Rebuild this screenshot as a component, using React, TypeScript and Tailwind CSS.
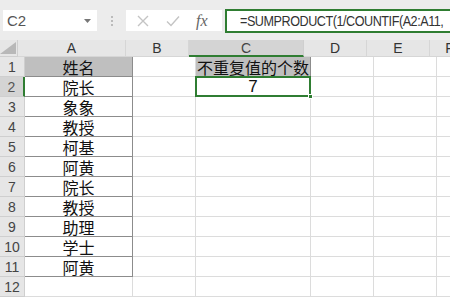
import React from "react";

const cols = [
  { name: "A", w: 108 },
  { name: "B", w: 63 },
  { name: "C", w: 115 },
  { name: "D", w: 63 },
  { name: "E", w: 63 },
  { name: "F", w: 40 },
];

const aVals = ["姓名", "院长", "象象", "教授", "柯基", "阿黄", "院长", "教授", "助理", "学士", "阿黄"];

const cjk = { fontFamily: '"Noto Sans CJK SC", "Noto Sans", sans-serif' };
const lat = { fontFamily: '"Liberation Sans", Arial, sans-serif' };

export default function App() {
  const rows = Array.from({ length: 12 }, (_, i) => i + 1);
  return (
    <div className="w-[450px] h-[300px] overflow-hidden bg-white relative" style={lat}>
      {/* toolbar */}
      <div className="h-[40px] bg-[#ececec] flex items-start pt-[10px] pl-[3px]">
        <div className="w-[94px] h-[21px] bg-white flex items-center justify-between pl-[4px] pr-[6px]">
          <span className="text-[15px] text-[#555] leading-none">C2</span>
          <svg width="7" height="4" viewBox="0 0 7 4"><polygon points="0,0 7,0 3.5,4" fill="#777" /></svg>
        </div>
        <div className="w-[29px] h-[21px] flex flex-col items-center justify-center gap-[2px]">
          <div className="w-[2px] h-[2px] bg-[#bbb]" />
          <div className="w-[2px] h-[2px] bg-[#bbb]" />
          <div className="w-[2px] h-[2px] bg-[#bbb]" />
        </div>
        <div className="w-[96px] h-[21px] bg-white flex items-center">
          <svg width="12" height="12" viewBox="0 0 12 12" className="ml-[11px]">
            <path d="M1 1 L11 11 M11 1 L1 11" stroke="#c4c4c4" strokeWidth="1.4" />
          </svg>
          <svg width="14" height="12" viewBox="0 0 14 12" className="ml-[17px]">
            <path d="M1 6.5 L5 10.5 L13 1.5" stroke="#c4c4c4" strokeWidth="1.4" fill="none" />
          </svg>
          <span className="ml-[16px] text-[16px] italic text-[#666] leading-none" style={{ fontFamily: '"Liberation Serif", serif' }}>fx</span>
        </div>
        <div className="ml-[3px] mt-[-1px] flex-1 h-[24px] border-2 border-r-0 border-[#2f7d32] bg-white flex items-center pl-[13px] overflow-hidden whitespace-nowrap">
          <span className="text-[14px] text-[#333] leading-none tracking-[-0.5px] scale-x-90 origin-left inline-block">=SUMPRODUCT(1/COUNTIF(A2:A11,</span>
        </div>
      </div>
      {/* header row */}
      <div className="flex h-[17px]">
        <div className="w-[25px] bg-[#e6e6e6] border-r border-b border-[#cfcfcf] flex items-end justify-end pr-[1px] pb-[2px]">
          <svg width="16" height="12" viewBox="0 0 16 12"><polygon points="16,0 16,12 0,12" fill="#b8b8b8" /></svg>
        </div>
        {cols.map((c) => (
          <div
            key={c.name}
            style={{ width: c.w }}
            className={
              c.name === "C"
                ? "shrink-0 bg-[#d4d4d4] border-r border-[#cfcfcf] border-b-2 border-b-[#2f7d32] flex items-center justify-center text-[14px] text-[#444] leading-none"
                : "shrink-0 bg-[#e6e6e6] border-r border-b border-[#d6d6d6] flex items-center justify-center text-[14px] text-[#333] leading-none"
            }
          >
            {c.name}
          </div>
        ))}
      </div>
      {rows.map((r) => (
        <div key={r} className="flex h-[20px]">
          <div
            className={
              r === 2
                ? "w-[25px] shrink-0 bg-[#d4d4d4] border-b border-[#cfcfcf] border-r-2 border-r-[#2f7d32] flex items-center justify-center text-[14px] text-[#555] leading-none"
                : "w-[25px] shrink-0 bg-[#e6e6e6] border-r border-b border-[#cfcfcf] flex items-center justify-center text-[14px] text-[#444] leading-none"
            }
          >
            {r}
          </div>
          {cols.map((c) => {
            if (c.name === "A" && r <= 11) {
              return (
                <div
                  key={c.name}
                  style={{ width: c.w, ...cjk }}
                  className={
                    r === 1
                      ? "shrink-0 bg-[#bfbfbf] border-r border-b border-[#8c8c8c] flex items-center justify-center text-[16px] text-[#111] leading-none"
                      : "shrink-0 bg-white border-r border-b border-[#8c8c8c] flex items-center justify-center text-[16px] text-[#111] leading-none"
                  }
                >
                  {aVals[r - 1]}
                </div>
              );
            }
            if (c.name === "C" && r === 1) {
              return (
                <div
                  key={c.name}
                  style={{ width: c.w, ...cjk }}
                  className="shrink-0 bg-[#bfbfbf] border-r border-b border-[#8c8c8c] flex items-center justify-center text-[16px] text-[#111] leading-none whitespace-nowrap"
                >
                  不重复值的个数
                </div>
              );
            }
            if (c.name === "C" && r === 2) {
              return (
                <div
                  key={c.name}
                  style={{ width: c.w }}
                  className="shrink-0 relative bg-white border-r border-b border-[#8c8c8c] flex items-center justify-center text-[17px] text-[#111] leading-none"
                >
                  7
                  <div className="absolute left-[-1px] top-[-1px] right-[-1px] bottom-[-1px] border-2 border-[#2f7d32]" />
                  <div className="absolute right-[-3px] bottom-[-3px] w-[5px] h-[5px] bg-[#2f7d32] border border-white" />
                </div>
              );
            }
            return (
              <div
                key={c.name}
                style={{ width: c.w }}
                className="shrink-0 bg-white border-r border-b border-[#dcdcdc]"
              />
            );
          })}
        </div>
      ))}
    </div>
  );
}
